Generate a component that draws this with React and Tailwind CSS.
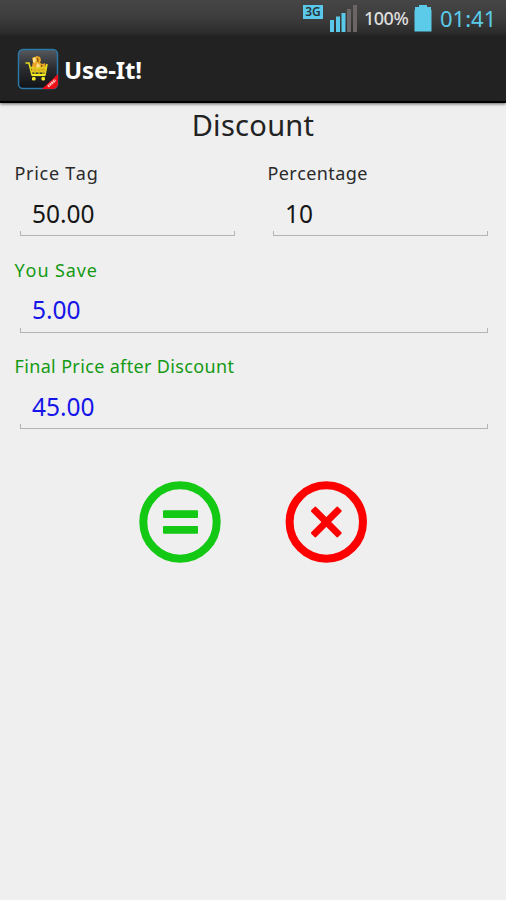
import { useState } from 'react';

const SignalIcon = () => (
  <svg width="28" height="28" viewBox="0 0 28 28" className="shrink-0">
    <rect x="1" y="16" width="4" height="12" fill="#5ac8e8" />
    <rect x="7" y="12.5" width="4" height="15.5" fill="#5ac8e8" />
    <rect x="12.5" y="9" width="4" height="19" fill="#5ac8e8" />
    <rect x="18" y="5" width="4" height="23" fill="#6b6565" />
    <rect x="24" y="1" width="4" height="27" fill="#6b6565" />
  </svg>
);

const BatteryIcon = () => (
  <svg width="18" height="28" viewBox="0 0 18 28" className="shrink-0">
    <path d="M5 1h8v2h4v3h0.5v21.5h-17V6H1V3h4z" fill="#5bcbe9" />
  </svg>
);

const AppIcon = () => (
  <svg width="42" height="42" viewBox="0 0 42 42" className="shrink-0">
    <defs>
      <linearGradient id="tile" x1="0" y1="0" x2="0" y2="1">
        <stop offset="0" stopColor="#55585c" />
        <stop offset="0.5" stopColor="#292b2f" />
        <stop offset="1" stopColor="#101216" />
      </linearGradient>
      <clipPath id="tileClip">
        <rect x="1" y="1" width="40" height="40" rx="5" />
      </clipPath>
    </defs>
    <rect x="1.5" y="1.5" width="39" height="39" rx="4.5" fill="url(#tile)" stroke="#2b79a8" strokeWidth="1.5" />
    {/* goods */}
    <path d="M15 18l1-4-1-4 3-1 2-1 3 1 1 3-1 3 3 1 2-1 1 4v4H15z" fill="#eaa526" />
    <path d="M16 10l2-1 1 3-1 3-2-1zM20 15l3 2-1 4h-3z" fill="#ffe28a" />
    <path d="M20.5 10l0.5 4M25 17l-1 4" stroke="#8a560a" strokeWidth="1.3" />
    {/* cart */}
    <path d="M8.5 15h3.500l3 12h13l2-11" fill="none" stroke="#e8dc1c" strokeWidth="1.6" />
    <path d="M13 19.500l6 1 10-1M14 23.500h15" fill="none" stroke="#e2cc1e" strokeWidth="1.8" />
    <path d="M18 20v6M22 21v5M26 20v6" stroke="#cfb91b" strokeWidth="1.300" />
    <path d="M15 27h13" stroke="#f4ed21" strokeWidth="2.200" />
    <rect x="15" y="29" width="3.500" height="3.500" rx="1.200" fill="#f4ed21" />
    <rect x="24.500" y="29" width="3.500" height="3.500" rx="1.200" fill="#f4ed21" />
    {/* ribbon */}
    <g clipPath="url(#tileClip)">
      <path d="M25 41L41 26v12l-3 3z" fill="#ee1119" />
      <path d="M31 38.5l7.5-6.5" stroke="#ffc0bd" strokeWidth="2.5" strokeDasharray="1.8 0.5" />
    </g>
  </svg>
);

const EqualsIcon = () => (
  <svg width="82" height="82" viewBox="0 0 82 82">
    <circle cx="41" cy="41" r="36.7" fill="none" stroke="#13c913" strokeWidth="8" />
    <rect x="24" y="29.3" width="35" height="7.7" rx="1" fill="#13c913" />
    <rect x="24" y="45" width="35" height="7.7" rx="1" fill="#13c913" />
  </svg>
);

const ClearIcon = () => (
  <svg width="82" height="82" viewBox="0 0 82 82">
    <circle cx="41.3" cy="41" r="36.7" fill="none" stroke="#fe0000" strokeWidth="8" />
    <g fill="#fe0000">
      <rect x="22.3" y="37.5" width="38" height="7" rx="1.5" transform="rotate(45 41.3 41)" />
      <rect x="22.3" y="37.5" width="38" height="7" rx="1.5" transform="rotate(-45 41.3 41)" />
    </g>
  </svg>
);

const Field = ({ label, value, onChange, readOnly, spacing = 'tracking-[0.4px]' }) => (
  <label className="block min-w-0 flex-1">
    <span
      className={`block h-[26px] pl-[14.5px] text-[18px] leading-[26px] whitespace-nowrap [font-kerning:none] ${spacing} ${
        readOnly ? 'text-[#159a15]' : 'text-[#2a2a2a]'
      }`}
    >
      {label}
    </span>
    <span className="mr-[18px] ml-[20px] block">
      <input
        type="text"
        value={value}
        onChange={onChange}
        readOnly={readOnly}
        className={`block h-[49px] w-full bg-transparent px-3 pt-[5px] text-[24.5px] outline-none ${
          readOnly ? 'text-[#1515e8]' : 'text-[#161616]'
        }`}
      />
      <span className="-mt-1 block h-[5px] border-x border-b border-[#b4b4b4]" />
    </span>
  </label>
);

export default function App() {
  const [price, setPrice] = useState('50.00');
  const [percent, setPercent] = useState('10');
  const [result, setResult] = useState({ saved: '5.00', total: '45.00' });

  const calculate = () => {
    const saved = (Number(price) * Number(percent)) / 100;
    setResult({ saved: saved.toFixed(2), total: (Number(price) - saved).toFixed(2) });
  };

  const clear = () => {
    setPrice('');
    setPercent('');
    setResult({ saved: '', total: '' });
  };

  return (
    <div className="flex h-[900px] w-[506px] flex-col overflow-hidden bg-[#efefef] font-['Noto_Sans',sans-serif]">
      {/* Status bar */}
      <div className="flex h-9 shrink-0 items-start justify-end bg-linear-to-b from-[#464646] via-[#3d3d3d] to-[#282828] pr-[10px]">
        <span className="mt-[5px] mr-[6px] flex h-[14px] w-5 items-center justify-center bg-[#5ac8e8] text-[12px] leading-none font-semibold text-[#26343a]">
          3G
        </span>
        <span className="mt-1 mr-[7px] flex">
          <SignalIcon />
        </span>
        <span className="mt-1 mr-[6px] w-[44px] text-[18px] leading-[28px] font-medium tracking-[-0.5px] whitespace-nowrap text-[#dedede]">
          100%
        </span>
        <span className="mt-1 mr-[8px] flex">
          <BatteryIcon />
        </span>
        <span className="mt-1 w-[56px] text-[22px] leading-[29px] whitespace-nowrap text-[#5bcbe9]">01:41</span>
      </div>

      {/* Action bar */}
      <header className="flex h-[67px] shrink-0 items-center border-b-2 border-black bg-[#222222] pt-px pl-[17px] shadow-[0_1px_3px_rgba(0,0,0,0.6)]">
        <AppIcon />
        <h1 className="mt-0.5 ml-[5px] text-[24px] leading-8 font-bold tracking-[-0.1px] text-white">Use-It!</h1>
      </header>

      <main className="flex-1">
        <h2 className="pt-[2px] text-center text-[29px] leading-10 tracking-[0.3px] text-[#222222]">Discount</h2>

        <div className="mt-[15px] flex flex-col gap-[20.5px]">
          <div className="flex">
            <Field
              label="Price Tag"
              value={price}
              onChange={(e) => setPrice(e.target.value)}
              spacing="tracking-[0.7px]"
            />
            <Field label="Percentage" value={percent} onChange={(e) => setPercent(e.target.value)} />
          </div>
          <Field label="You Save" value={result.saved} readOnly spacing="tracking-[0.9px]" />
          <Field label="Final Price after Discount" value={result.total} readOnly spacing="tracking-[0.35px]" />
        </div>

        <div className="mt-[52px] flex justify-center gap-[64px]">
          <button type="button" aria-label="Calculate" onClick={calculate}>
            <EqualsIcon />
          </button>
          <button type="button" aria-label="Clear" onClick={clear}>
            <ClearIcon />
          </button>
        </div>
      </main>
    </div>
  );
}
